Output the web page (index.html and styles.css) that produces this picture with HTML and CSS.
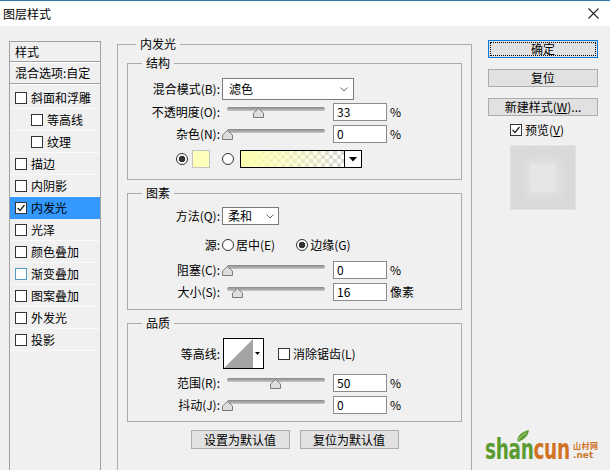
FILE: index.html
```html
<!DOCTYPE html>
<html lang="zh-CN">
<head>
<meta charset="utf-8">
<title>图层样式</title>
<link rel="stylesheet" href="styles.css">
</head>
<body>
<header class="titlebar">
  <span class="title">图层样式</span>
  <svg class="close" width="11" height="11" viewBox="0 0 11 11"><path d="M0.5 0.5L10.5 10.5M10.5 0.5L0.5 10.5" stroke="#222" stroke-width="1.1" fill="none"/></svg>
</header>
<div class="content">
  <aside class="stylelist">
    <div class="head">样式</div>
    <div class="blend">混合选项:自定</div>
    <ul class="items">
      <li class="item"><span class="cb"></span>斜面和浮雕</li>
      <li class="item sub"><span class="cb"></span>等高线</li>
      <li class="item sub"><span class="cb"></span>纹理</li>
      <li class="item"><span class="cb"></span>描边</li>
      <li class="item"><span class="cb"></span>内阴影</li>
      <li class="item selected"><span class="cb"><svg width="10" height="10" viewBox="0 0 10 10"><path d="M1.5 5L4 7.5L8.5 2" stroke="#222" stroke-width="1.3" fill="none"/></svg></span>内发光</li>
      <li class="item"><span class="cb"></span>光泽</li>
      <li class="item"><span class="cb"></span>颜色叠加</li>
      <li class="item"><span class="cb hover"></span>渐变叠加</li>
      <li class="item"><span class="cb"></span>图案叠加</li>
      <li class="item"><span class="cb"></span>外发光</li>
      <li class="item"><span class="cb"></span>投影</li>
    </ul>
  </aside>

  <fieldset class="group outer">
    <legend>内发光</legend>

    <fieldset class="group inner structure">
      <legend>结构</legend>
      <div class="row r-select">
        <span class="lbl">混合模式(B):</span>
        <div class="select wide"><span>滤色</span><svg width="8" height="5" viewBox="0 0 8 5"><path d="M0.5 0.5L4 4L7.5 0.5" stroke="#666" fill="none"/></svg></div>
      </div>
      <div class="row r-slider first">
        <span class="lbl">不透明度(O):</span>
        <div class="slider"><div class="track"><svg class="thumb" style="left:32%" width="11" height="10" viewBox="0 0 11 10"><path d="M5.5 0.5L10.5 5V9.5H0.5V5Z" fill="#dedede" stroke="#7a7a7a"/></svg></div></div>
        <div class="num">33</div><span class="unit">%</span>
      </div>
      <div class="row r-slider">
        <span class="lbl">杂色(N):</span>
        <div class="slider"><div class="track"><svg class="thumb" style="left:0%" width="11" height="10" viewBox="0 0 11 10"><path d="M5.5 0.5L10.5 5V9.5H0.5V5Z" fill="#dedede" stroke="#7a7a7a"/></svg></div></div>
        <div class="num">0</div><span class="unit">%</span>
      </div>
      <div class="row r-color">
        <span class="radio on"></span>
        <span class="swatch"></span>
        <span class="radio second"></span>
        <div class="grad"><div class="grad-fill"></div><div class="grad-btn"><svg width="8" height="5" viewBox="0 0 8 5"><path d="M0 0H8L4 4.5Z" fill="#000"/></svg></div></div>
      </div>
    </fieldset>

    <fieldset class="group inner elements">
      <legend>图素</legend>
      <div class="row r-method">
        <span class="lbl">方法(Q):</span>
        <div class="select narrow"><span>柔和</span><svg width="8" height="5" viewBox="0 0 8 5"><path d="M0.5 0.5L4 4L7.5 0.5" stroke="#666" fill="none"/></svg></div>
      </div>
      <div class="row r-source">
        <span class="lbl">源:</span>
        <span class="radio"></span><span class="opt">居中(E)</span>
        <span class="radio on edge"></span><span class="opt">边缘(G)</span>
      </div>
      <div class="row r-slider gap7">
        <span class="lbl">阻塞(C):</span>
        <div class="slider"><div class="track"><svg class="thumb" style="left:0%" width="11" height="10" viewBox="0 0 11 10"><path d="M5.5 0.5L10.5 5V9.5H0.5V5Z" fill="#dedede" stroke="#7a7a7a"/></svg></div></div>
        <div class="num">0</div><span class="unit">%</span>
      </div>
      <div class="row r-slider">
        <span class="lbl">大小(S):</span>
        <div class="slider"><div class="track"><svg class="thumb" style="left:11%" width="11" height="10" viewBox="0 0 11 10"><path d="M5.5 0.5L10.5 5V9.5H0.5V5Z" fill="#dedede" stroke="#7a7a7a"/></svg></div></div>
        <div class="num">16</div><span class="unit">像素</span>
      </div>
    </fieldset>

    <fieldset class="group inner quality">
      <legend>品质</legend>
      <div class="row r-contour">
        <span class="lbl">等高线:</span>
        <svg class="contour" width="41" height="31" viewBox="0 0 41 31">
          <rect x="0.5" y="0.5" width="40" height="30" fill="#fff" stroke="#000"/>
          <path d="M1 30L30 1V30Z" fill="#a3a3a3"/>
          <path d="M32 14H37L34.5 17Z" fill="#000"/>
        </svg>
        <span class="cb aa"></span><span class="opt">消除锯齿(L)</span>
      </div>
      <div class="row r-slider gap5">
        <span class="lbl">范围(R):</span>
        <div class="slider"><div class="track"><svg class="thumb" style="left:49%" width="11" height="10" viewBox="0 0 11 10"><path d="M5.5 0.5L10.5 5V9.5H0.5V5Z" fill="#dedede" stroke="#7a7a7a"/></svg></div></div>
        <div class="num">50</div><span class="unit">%</span>
      </div>
      <div class="row r-slider">
        <span class="lbl">抖动(J):</span>
        <div class="slider"><div class="track"><svg class="thumb" style="left:0%" width="11" height="10" viewBox="0 0 11 10"><path d="M5.5 0.5L10.5 5V9.5H0.5V5Z" fill="#dedede" stroke="#7a7a7a"/></svg></div></div>
        <div class="num">0</div><span class="unit">%</span>
      </div>
    </fieldset>

    <div class="btnrow">
      <button class="btn">设置为默认值</button>
      <button class="btn">复位为默认值</button>
    </div>
  </fieldset>

  <aside class="side">
    <button class="btn default">确定</button>
    <button class="btn">复位</button>
    <button class="btn">新建样式(<u>W</u>)...</button>
    <div class="preview-cb"><span class="cb"><svg width="10" height="10" viewBox="0 0 10 10"><path d="M1.5 5L4 7.5L8.5 2" stroke="#222" stroke-width="1.3" fill="none"/></svg></span><span>预览(<u>V</u>)</span></div>
    <div class="preview"><div class="glow"></div></div>
  </aside>
</div>

<div class="watermark">
  <div class="wm-main-box"><span class="wm-main"><span class="wm-g">shan</span><span class="wm-o">cun</span></span></div>
  <div class="wm-side"><span class="wm-cn">山村网</span><span class="wm-net">.net</span></div>
  <svg class="wm-leaf" width="16" height="14" viewBox="0 0 16 14"><path d="M2 13C2 7 6 3 14 1C13 7 9 11 2 13Z" fill="#5c9e2e"/><path d="M2 13C4 9 7 6 11 4" stroke="#cfe6b8" stroke-width="0.8" fill="none"/></svg>
</div>
</body>
</html>
```

FILE: styles.css
```css
* { box-sizing: border-box; }
html, body { margin: 0; padding: 0; }
body {
  width: 610px;
  height: 470px;
  overflow: hidden;
  position: relative;
  background: #f0f0f0;
  font-family: "Noto Sans CJK SC", "Microsoft YaHei", sans-serif;
  font-size: 12px;
  line-height: 16px;
  color: #000;
}

/* title bar */
.titlebar {
  height: 26px;
  background: #fff;
  border-top: 1px solid #2b79b0;
  display: flex;
  align-items: center;
  justify-content: space-between;
  padding: 0 11px 0 3px;
}
.close { display: block; }

.content {
  display: flex;
  align-items: flex-start;
  padding: 10px 0 0 9px;
}

/* left style list */
.stylelist {
  flex: none;
  width: 92px;
  height: 440px;
  margin-top: 5px;
  border: 1px solid #a0a0a0;
}
.head {
  height: 20px;
  line-height: 19px;
  padding-left: 5px;
  border-bottom: 1px solid #a0a0a0;
  box-shadow: 0 1px 0 #fff;
}
.blend {
  height: 21px;
  line-height: 20px;
  margin: 1px 0 3px;
  padding-left: 5px;
  border-bottom: 1px solid #a0a0a0;
  box-shadow: 0 1px 0 #fff;
}
.items { list-style: none; margin: 0; padding: 0; }
.item {
  height: 22px;
  border-bottom: 1px solid #fafafa;
  display: flex;
  align-items: center;
  gap: 4px;
  padding-left: 5px;
}
.item.sub { padding-left: 21px; }
.item.selected { background: #3399ff; border-bottom-color: #3399ff; }

.cb {
  flex: none;
  width: 12px;
  height: 12px;
  border: 1px solid #333;
  background: #fff;
  display: flex;
  align-items: center;
  justify-content: center;
}
.cb.hover { border-color: #4f9cc0; }

/* group boxes */
fieldset.group {
  margin: 0;
  border: 1px solid #ababab;
  min-width: 0;
}
fieldset.group > legend {
  height: 16px;
  line-height: 16px;
  padding: 0 4px;
}
.outer {
  flex: none;
  width: 355px;
  height: 450px;
  margin-left: 16px !important;
  padding: 3px 9px 0;
}
.outer > legend { margin-left: 9px; }
.inner { padding: 0; }
.inner > legend { margin-left: 14px; }

.structure { padding: 7px 0 11px; }
.elements { margin-top: 5px !important; padding: 6px 0 8px; }
.quality { margin-top: 5px !important; padding: 7px 0 7px; }

/* rows */
.row { display: flex; align-items: center; }
.lbl {
  flex: none;
  width: 94px;
  padding-right: 2px;
  text-align: right;
  white-space: nowrap;
}
.r-select { height: 22px; }
.r-slider { height: 18px; margin-top: 4px; }
.r-slider.first { margin-top: 3px; }
.r-slider.gap7 { margin-top: 7px; }
.r-slider.gap5 { margin-top: 5px; }
.r-color { height: 18px; margin-top: 7px; padding-left: 48px; }
.r-method { height: 18px; }
.r-source { height: 18px; margin-top: 11px; }
.r-contour { height: 31px; }

.select {
  height: 100%;
  border: 1px solid #7a7a7a;
  background: #fff;
  display: flex;
  align-items: center;
  justify-content: space-between;
  padding: 0 5px 0 6px;
}
.select svg { display: block; }
.select.wide { width: 132px; }
.select.narrow { width: 57px; padding-left: 5px; padding-right: 4px; }

.slider {
  flex: none;
  width: 108px;
  height: 100%;
  padding: 4px 5px 0;
}
.track {
  position: relative;
  height: 4px;
  border-radius: 2px;
  background: linear-gradient(#878787, #c6c6c6);
}
.thumb {
  position: absolute;
  top: 1px;
  margin-left: -5.5px;
  display: block;
}
.num {
  flex: none;
  width: 54px;
  height: 100%;
  margin-left: 3px;
  border: 1px solid #8c8c8c;
  background: #fff;
  padding-left: 3px;
  line-height: 16px;
}
.unit { margin-left: 3px; }

.radio {
  flex: none;
  width: 12px;
  height: 12px;
  border: 1px solid #333;
  border-radius: 50%;
  background: #fff;
}
.radio.on { background: radial-gradient(circle, #333 0 3px, #fff 3.6px); }
.swatch {
  flex: none;
  width: 18px;
  height: 18px;
  margin-left: 4px;
  background: #ffffb9;
  border: 1px solid #c4c4c4;
}
.radio.second { margin-left: 12px; }
.grad {
  flex: none;
  display: flex;
  width: 122px;
  height: 18px;
  margin-left: 6px;
  border: 1px solid #000;
}
.grad-fill {
  flex: 1;
  background:
    linear-gradient(to right, #ffffb0 0%, rgba(255,255,176,0.6) 45%, rgba(255,255,176,0) 100%),
    repeating-conic-gradient(#d6d6d6 0 25%, #fff 0 50%) 0 0 / 8px 8px;
}
.grad-btn {
  width: 17px;
  border-left: 1px solid #000;
  background: #fff;
  display: flex;
  align-items: center;
  justify-content: center;
}
.grad-btn svg { display: block; }

.opt { margin-left: 2px; white-space: nowrap; }
.radio.edge { margin-left: 21px; }

.contour { display: block; margin-left: 1px; flex: none; }
.cb.aa { margin-left: 14px; }
.r-contour .opt { margin-left: 3px; }

/* buttons */
.btn {
  height: 19px;
  padding: 0;
  border: 1px solid #adadad;
  background: #e1e1e1;
  font-family: inherit;
  font-size: 12px;
  line-height: 16px;
  color: #000;
  text-align: center;
}
.btnrow {
  display: flex;
  justify-content: center;
  gap: 10px;
  margin-top: 8px;
}
.btnrow .btn { width: 99px; }

/* right side */
.side {
  flex: none;
  width: 110px;
  margin: 4px 0 0 16px;
  display: flex;
  flex-direction: column;
  gap: 11px;
}
.side .btn { width: 110px; height: 18px; }
.btn.default {
  border-color: #0078d7;
  outline: 1px dotted #000;
  outline-offset: -3px;
}
.preview-cb {
  display: flex;
  align-items: center;
  gap: 3px;
  height: 14px;
  margin-top: -4px;
  padding-left: 22px;
}
.preview {
  width: 66px;
  height: 65px;
  margin: -3px 0 0 22px;
  background: #d9d9d9;
  border: 1px solid #e2e2e2;
  display: flex;
  align-items: center;
  justify-content: center;
}
.glow {
  width: 26px;
  height: 28px;
  background: #e6e6e6;
  box-shadow: 0 0 8px 5px #e1e1e1;
}

/* watermark overlay */
.watermark {
  position: absolute;
  left: 485px;
  top: 431px;
  width: 122px;
  height: 34px;
  display: flex;
  align-items: flex-end;
}
.wm-main-box { width: 88px; height: 30px; flex: none; }
.wm-main {
  display: inline-block;
  font-family: "DejaVu Sans", sans-serif;
  font-weight: bold;
  font-size: 28px;
  line-height: 30px;
  letter-spacing: -0.5px;
  transform: scaleX(0.66);
  transform-origin: left center;
  white-space: nowrap;
}
.wm-g { color: #5a9b30; }
.wm-o { color: #d2711f; }
.wm-side {
  display: flex;
  flex-direction: column;
  margin-bottom: 5px;
  color: #d2711f;
  font-weight: bold;
}
.wm-cn { font-size: 8px; line-height: 9px; letter-spacing: 0.5px; }
.wm-net { font-family: "DejaVu Sans", sans-serif; font-size: 9px; line-height: 10px; color: #c9782e; }
.wm-leaf { position: absolute; left: 30px; top: -2px; }
```
